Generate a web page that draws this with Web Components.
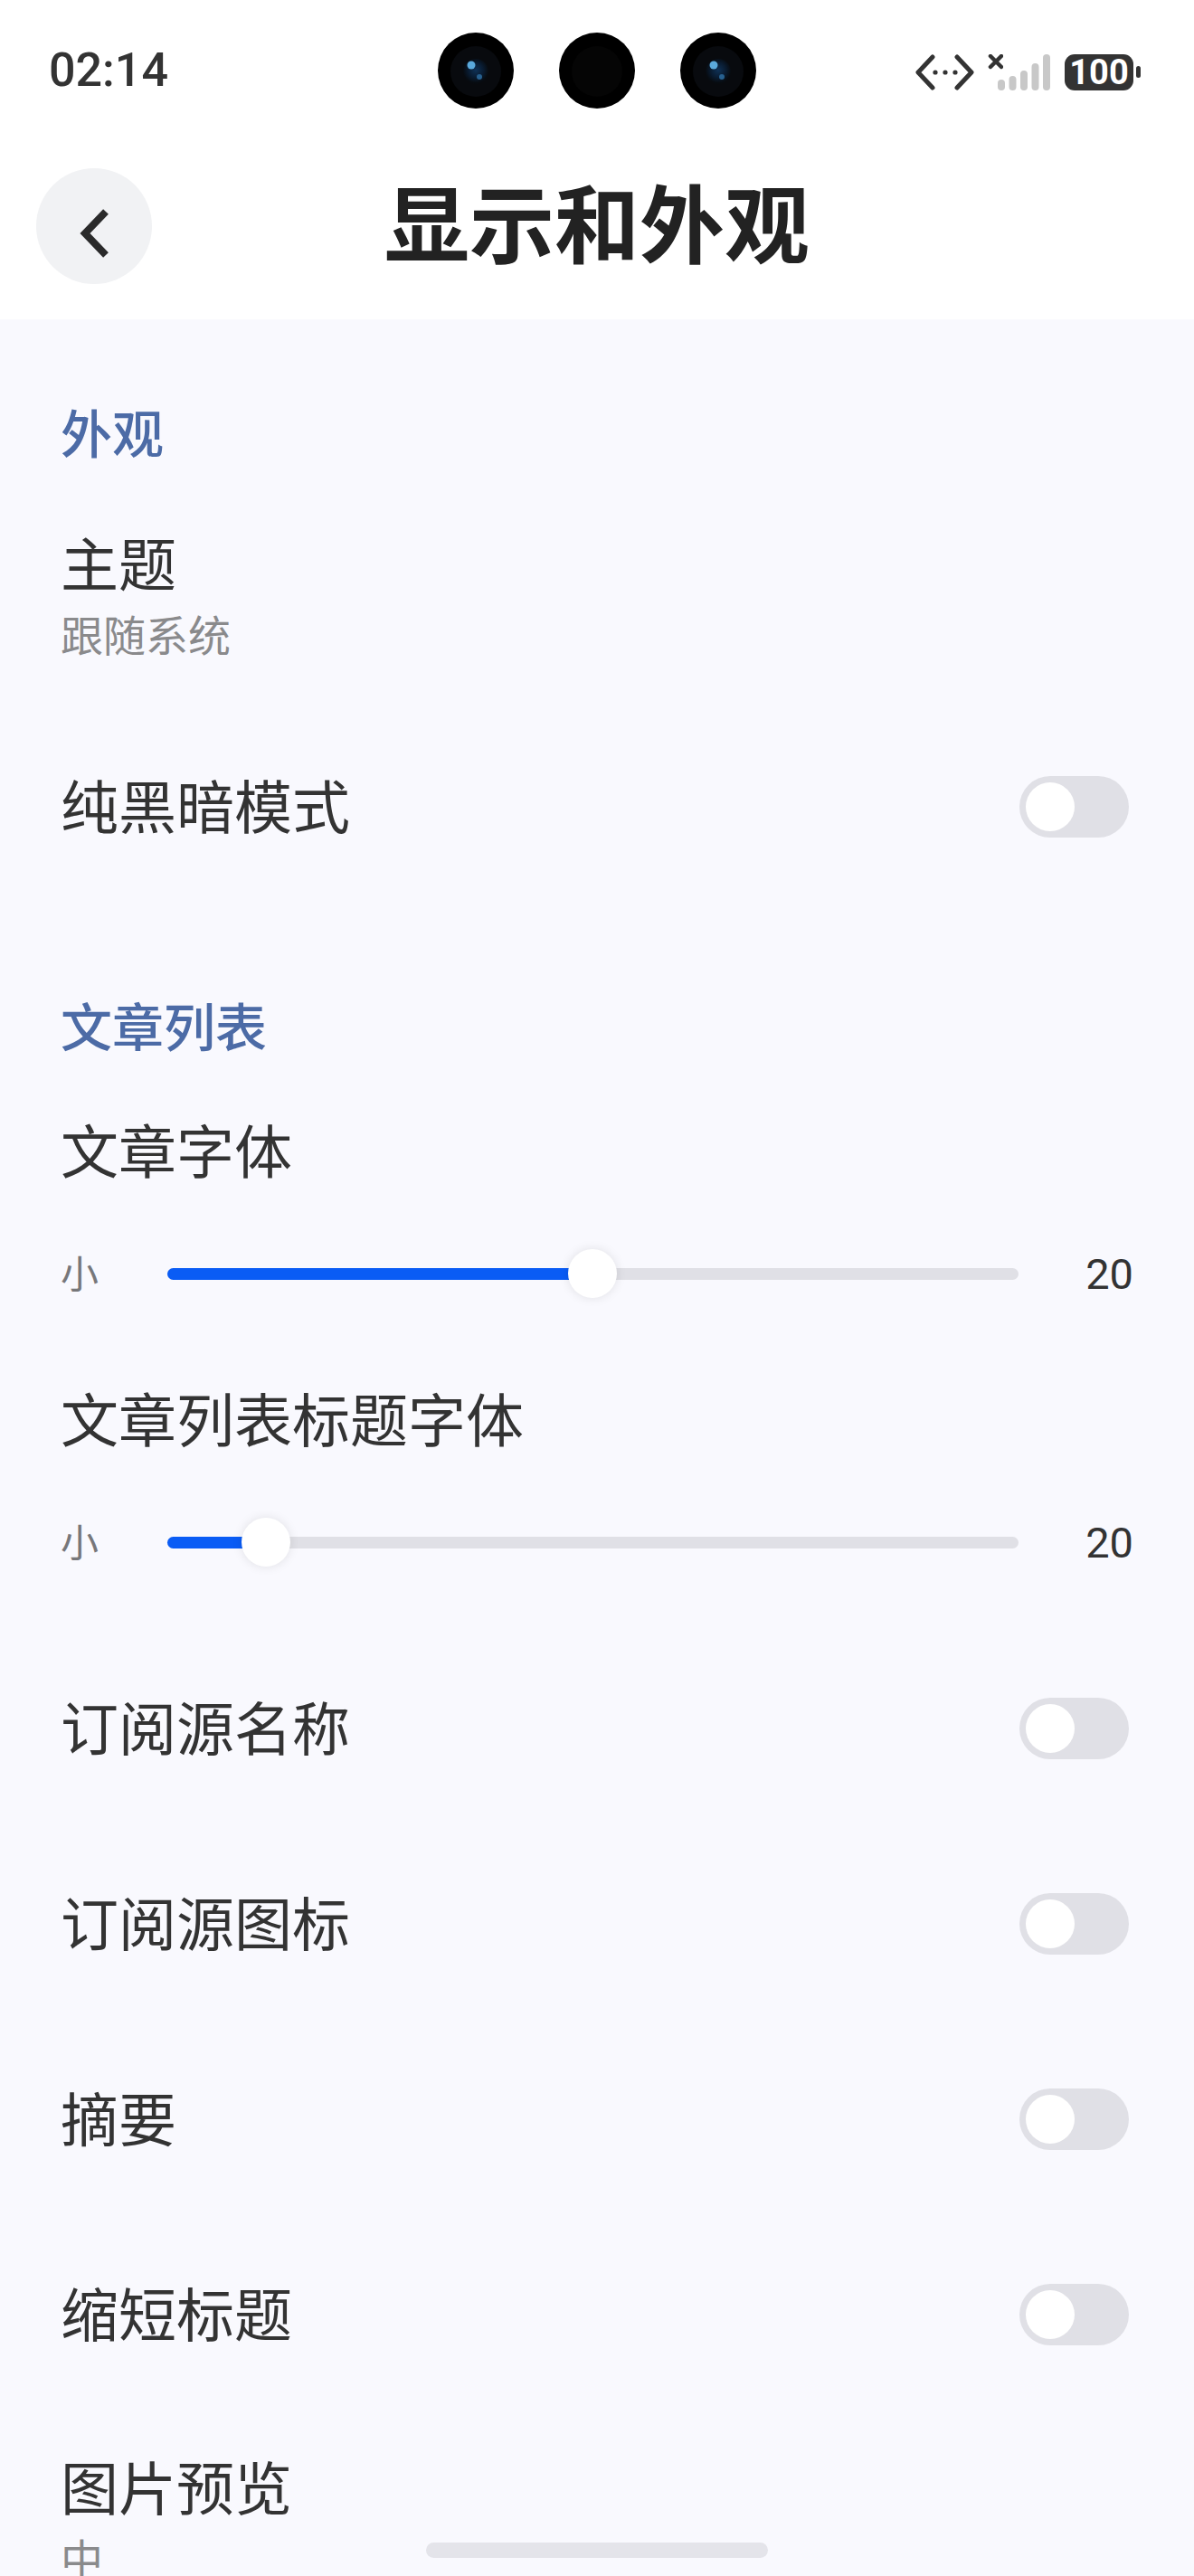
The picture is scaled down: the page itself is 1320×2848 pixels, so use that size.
<!DOCTYPE html>
<html lang="zh">
<head>
<meta charset="utf-8">
<title>显示和外观</title>
<style>
  html, body {
    margin: 0;
    padding: 0;
  }

  body {
    position: relative;
    width: 1320px;
    height: 2848px;
    overflow: hidden;
    background-color: #f9f9fe;
    color: #333333;
    font-family: "Noto Sans CJK SC", "Noto Sans", sans-serif;
  }
</style>
</head>
<body>
  <app-header></app-header>
  <main>
    <section-title style="--pt: 73px; --pb: 14px;">外观</section-title>
    <setting-row sub="跟随系统" style="--h: 244px; --title-top: 38px;">主题</setting-row>
    <setting-row toggle>纯黑暗模式</setting-row>

    <section-title style="--pt: 82px; --pb: 45px;">文章列表</section-title>
    <slider-row percent="49.9" value="20" style="margin-bottom: 18px;">文章字体</slider-row>
    <slider-row percent="11.6" value="20">文章列表标题字体</slider-row>
    <setting-row toggle>订阅源名称</setting-row>
    <setting-row toggle>订阅源图标</setting-row>
    <setting-row toggle>摘要</setting-row>
    <setting-row toggle>缩短标题</setting-row>
    <setting-row sub="中" style="--h: 244px; --title-top: 38px;">图片预览</setting-row>
  </main>
  <home-bar></home-bar>

<script>
class StatusBar extends HTMLElement {
  constructor() {
    super();
    this.shadowDOM = this.attachShadow({ mode: 'open' });
  }

  connectedCallback() {
    this.render();
  }

  lens() {
    return `
      <svg width="84" height="84" viewBox="0 0 84 84">
        <defs>
          <radialGradient id="glass" cx="50%" cy="45%" r="50%">
            <stop offset="0%" stop-color="#0f3156"/>
            <stop offset="60%" stop-color="#091b30"/>
            <stop offset="100%" stop-color="#070b10"/>
          </radialGradient>
        </defs>
        <circle cx="42" cy="42" r="42" fill="#000"/>
        <circle cx="42" cy="43" r="28" fill="#080a0e"/>
        <circle cx="42" cy="43" r="14" fill="url(#glass)"/>
        <circle cx="37" cy="36" r="4.5" fill="#5aa9dc"/>
        <circle cx="46" cy="49" r="3" fill="#27608f"/>
      </svg>`;
  }

  render() {
    this.shadowDOM.innerHTML = `
      <style>
      :host {
        display: grid;
        grid-template-columns: 1fr auto 1fr;
        align-items: center;
        height: 156px;
        padding: 0 54px;
        color: #333333;
      }

      .time {
        font: 500 52px/1 Roboto, sans-serif;
      }

      .cameras {
        display: flex;
        gap: 50px;
      }

      .cameras svg {
        display: block;
      }

      .icons {
        display: flex;
        justify-content: flex-end;
        align-items: center;
        margin: 3px 5px 0 0;
      }

      .icons svg {
        display: block;
      }

      .battery {
        display: flex;
        align-items: center;
        gap: 3px;
        margin-left: 16px;
      }

      .battery-body {
        width: 76px;
        height: 40px;
        border-radius: 11px;
        background-color: #333333;
        color: #ffffff;
        font: 700 38px/40px Roboto, sans-serif;
        text-align: center;
      }

      .battery-tip {
        width: 5px;
        height: 13px;
        border-radius: 3px;
        background-color: #333333;
      }
      </style>
      <div class="time">02:14</div>
      <div class="cameras">
        ${this.lens()}
        <svg width="84" height="84" viewBox="0 0 84 84">
          <circle cx="42" cy="42" r="42" fill="#000"/>
          <circle cx="42" cy="43" r="28" fill="#050505"/>
        </svg>
        ${this.lens()}
      </div>
      <div class="icons">
        <svg width="97" height="40" viewBox="0 0 97 40">
          <path d="M19 3 L3 20 L19 37" fill="none" stroke="#333" stroke-width="5" stroke-linecap="round" stroke-linejoin="round"/>
          <path d="M46 3 L62 20 L46 37" fill="none" stroke="#333" stroke-width="5" stroke-linecap="round" stroke-linejoin="round"/>
          <circle cx="22" cy="20" r="2.6" fill="#333"/>
          <circle cx="33" cy="20" r="2.6" fill="#333"/>
          <circle cx="44" cy="20" r="2.6" fill="#333"/>
          <path d="M83 2 L95 14 M95 2 L83 14" fill="none" stroke="#333" stroke-width="4.5" stroke-linecap="round"/>
        </svg>
        <svg width="58" height="40" viewBox="0 0 58 40" style="margin-left: -6px;">
          <rect x="0" y="28" width="8" height="12" rx="4" fill="#c8c8c8"/>
          <rect x="12.5" y="24" width="8" height="16" rx="4" fill="#c8c8c8"/>
          <rect x="25" y="18" width="8" height="22" rx="4" fill="#c8c8c8"/>
          <rect x="37.5" y="10" width="8" height="30" rx="4" fill="#c8c8c8"/>
          <rect x="50" y="0" width="8" height="40" rx="4" fill="#c8c8c8"/>
        </svg>
        <div class="battery">
          <div class="battery-body">100</div>
          <div class="battery-tip"></div>
        </div>
      </div>
    `;
  }
}

class TitleBar extends HTMLElement {
  constructor() {
    super();
    this.shadowDOM = this.attachShadow({ mode: 'open' });
  }

  connectedCallback() {
    this.render();
  }

  render() {
    this.shadowDOM.innerHTML = `
      <style>
      :host {
        display: grid;
        grid-template-columns: 168px 1fr 168px;
        align-items: center;
        height: 187px;
        padding-bottom: 10px;
      }

      .back {
        display: flex;
        align-items: center;
        justify-content: center;
        width: 128px;
        height: 128px;
        margin-left: 40px;
        border-radius: 50%;
        background-color: #f1f2f4;
      }

      .back svg {
        display: block;
        margin-top: 16px;
      }

      h1 {
        margin: -14px 0 0;
        font-size: 94px;
        line-height: 1;
        font-weight: 700;
        color: #222222;
        text-align: center;
      }
      </style>
      <div class="back">
        <svg width="36" height="54" viewBox="0 0 36 54">
          <path d="M31 3 L8 27 L31 51" fill="none" stroke="#2a2a2a" stroke-width="8"/>
        </svg>
      </div>
      <h1>显示和外观</h1>
      <div></div>
    `;
  }
}

class AppHeader extends HTMLElement {
  constructor() {
    super();
    this.shadowDOM = this.attachShadow({ mode: 'open' });
  }

  connectedCallback() {
    this.shadowDOM.innerHTML = `
      <style>
      :host {
        display: block;
        background-color: #ffffff;
      }
      </style>
      <status-bar></status-bar>
      <title-bar></title-bar>
    `;
  }
}

class SectionTitle extends HTMLElement {
  constructor() {
    super();
    this.shadowDOM = this.attachShadow({ mode: 'open' });
  }

  connectedCallback() {
    this.shadowDOM.innerHTML = `
      <style>
      :host {
        display: block;
        padding: var(--pt, 0) 67px var(--pb, 0);
        font-size: 57px;
        line-height: 100px;
        font-weight: 500;
        color: #4c6ba6;
      }
      </style>
      <slot></slot>
    `;
  }
}

class SettingRow extends HTMLElement {
  constructor() {
    super();
    this.shadowDOM = this.attachShadow({ mode: 'open' });
  }

  connectedCallback() {
    const sub = this.getAttribute('sub');
    const toggle = this.hasAttribute('toggle');

    this.shadowDOM.innerHTML = `
      <style>
      :host {
        display: flex;
        align-items: center;
        justify-content: space-between;
        box-sizing: border-box;
        height: var(--h, 216px);
        padding: 0 72px 0 67px;
      }

      :host([sub]) {
        align-items: flex-start;
        padding-top: var(--title-top, 0);
      }

      .title {
        padding-bottom: var(--title-pb, 8px);
        font-size: 64px;
        line-height: 84px;
        color: #333333;
      }

      :host([sub]) .title {
        padding-bottom: 0;
      }

      .sub {
        margin-top: 8px;
        font-size: 47px;
        line-height: 60px;
        color: #8a8a8c;
      }
      </style>
      <div>
        <div class="title"><slot></slot></div>
        ${sub ? `<div class="sub">${sub}</div>` : ''}
      </div>
      ${toggle ? '<toggle-switch></toggle-switch>' : ''}
    `;
  }
}

class ToggleSwitch extends HTMLElement {
  constructor() {
    super();
    this.shadowDOM = this.attachShadow({ mode: 'open' });
  }

  connectedCallback() {
    this.shadowDOM.innerHTML = `
      <style>
      :host {
        display: flex;
        align-items: center;
        box-sizing: border-box;
        width: 121px;
        height: 68px;
        padding-left: 7px;
        border-radius: 34px;
        background-color: #e0e0e6;
      }

      .knob {
        width: 54px;
        height: 54px;
        border-radius: 50%;
        background-color: #ffffff;
      }
      </style>
      <div class="knob"></div>
    `;
  }
}

class SliderRow extends HTMLElement {
  constructor() {
    super();
    this.shadowDOM = this.attachShadow({ mode: 'open' });
  }

  connectedCallback() {
    const percent = this.getAttribute('percent');
    const value = this.getAttribute('value');

    this.shadowDOM.innerHTML = `
      <style>
      :host {
        display: block;
        padding: 0 67px 48px;
      }

      .title {
        font-size: 64px;
        line-height: 84px;
        color: #333333;
      }

      .control {
        display: flex;
        align-items: center;
        height: 100px;
        margin-top: 47px;
      }

      .min {
        width: 118px;
        padding-bottom: 6px;
        font-size: 42px;
        color: #77777a;
      }

      .track {
        position: relative;
        flex: 1;
        height: 13px;
        border-radius: 7px;
        background-color: #e0e0e6;
      }

      .fill {
        height: 100%;
        border-radius: 7px 0 0 7px;
        background-color: #0a5cf5;
      }

      .thumb {
        position: absolute;
        top: 50%;
        width: 54px;
        height: 54px;
        border-radius: 50%;
        background-color: #ffffff;
        box-shadow: 0 0 12px rgba(0, 0, 0, 0.1);
        transform: translate(-50%, -50%);
      }

      .value {
        width: 127px;
        font: 400 47px/1 Roboto, sans-serif;
        color: #333333;
        text-align: right;
      }
      </style>
      <div class="title"><slot></slot></div>
      <div class="control">
        <div class="min">小</div>
        <div class="track">
          <div class="fill" style="width: ${percent}%"></div>
          <div class="thumb" style="left: ${percent}%"></div>
        </div>
        <div class="value">${value}</div>
      </div>
    `;
  }
}

class HomeBar extends HTMLElement {
  constructor() {
    super();
    this.shadowDOM = this.attachShadow({ mode: 'open' });
  }

  connectedCallback() {
    this.shadowDOM.innerHTML = `
      <style>
      :host {
        position: absolute;
        left: 471px;
        top: 2811px;
        width: 378px;
        height: 17px;
        border-radius: 9px;
        background-color: #e4e4ea;
      }
      </style>
    `;
  }
}

customElements.define('status-bar', StatusBar);
customElements.define('title-bar', TitleBar);
customElements.define('app-header', AppHeader);
customElements.define('section-title', SectionTitle);
customElements.define('setting-row', SettingRow);
customElements.define('toggle-switch', ToggleSwitch);
customElements.define('slider-row', SliderRow);
customElements.define('home-bar', HomeBar);
</script>
</body>
</html>
